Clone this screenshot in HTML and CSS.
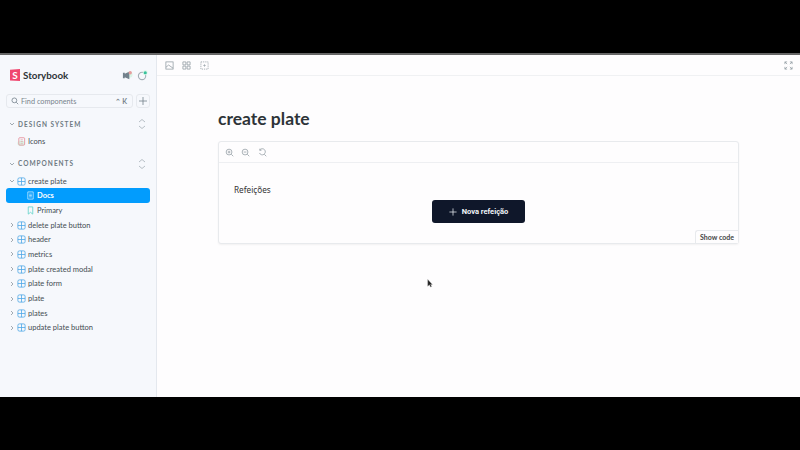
FILE: index.html
```html
<!DOCTYPE html>
<html lang="en">
<head>
    <meta charset="UTF-8">
    <title>create plate - Storybook</title>
    <link rel="stylesheet" href="styles.css">
</head>
<body>
    <div class="app">
        <aside class="sidebar">
            <div class="brand">
                <svg class="logo" viewBox="0 0 10 12"><path d="M0 0.7 L10 0 V12 L0 11.6 Z" fill="#f0476f"/><text x="5" y="9.6" text-anchor="middle" class="logo-s">S</text></svg>
                <span class="brand-name">Storybook</span>
                <svg class="brand-icon" viewBox="0 0 12 12"><circle cx="8" cy="5" r="3.5" fill="#d9f5e6"/><path d="M1 3 H3 V9 H1 Z M3 4 L8 2 V10 L3 8 Z" fill="#73828c"/><circle cx="9" cy="3" r="1.8" fill="#e69d9d"/></svg>
                <svg class="brand-icon second" viewBox="0 0 12 12"><circle cx="5.5" cy="6.5" r="4" fill="none" stroke="#a4afb6" stroke-width="1.2"/><circle cx="9" cy="3" r="2.6" fill="#d9f5e6"/><circle cx="9" cy="3" r="1.7" fill="#37c19d"/></svg>
            </div>
            <div class="search-row">
                <div class="search">
                    <svg class="icon" viewBox="0 0 10 10"><circle cx="4.2" cy="4.2" r="3" fill="none" stroke="#73828c"/><path d="M6.5 6.5 L9 9" stroke="#73828c"/></svg>
                    <span class="search-text">Find components</span>
                    <span class="search-key">⌃ K</span>
                </div>
                <div class="add-btn">
                    <svg class="icon" viewBox="0 0 10 10"><path d="M5 1 V9 M1 5 H9" stroke="#73828c" stroke-width="0.8"/></svg>
                </div>
            </div>

            <div class="section">
                <div class="section-head">
                    <svg class="chev" viewBox="0 0 6 6"><path d="M1 2 L3 4 L5 2" fill="none" stroke="#8b969e" stroke-width="0.8"/></svg>
                    <span class="section-title">DESIGN SYSTEM</span>
                    <svg class="updown" viewBox="0 0 8 12"><path d="M1 4 L4 1.5 L7 4 M1 8 L4 10.5 L7 8" fill="none" stroke="#a4afb6" stroke-width="0.8"/></svg>
                </div>
                <div class="row no-arrow">
                    <svg class="icon" viewBox="0 0 10 10"><rect x="0.5" y="4" width="8" height="6" rx="3" fill="#d9f5e6"/><rect x="2" y="0.8" width="6.5" height="8.2" rx="1" fill="none" stroke="#e58a96" stroke-width="0.9"/><path d="M4 3 H6.5 M4 5 H6.5 M4 7 H6.5" stroke="#e58a96" stroke-width="0.6"/></svg>
                    <span>Icons</span>
                </div>
            </div>

            <div class="section components">
                <div class="section-head">
                    <svg class="chev" viewBox="0 0 6 6"><path d="M1 2 L3 4 L5 2" fill="none" stroke="#8b969e" stroke-width="0.8"/></svg>
                    <span class="section-title">COMPONENTS</span>
                    <svg class="updown" viewBox="0 0 8 12"><path d="M1 4 L4 1.5 L7 4 M1 8 L4 10.5 L7 8" fill="none" stroke="#a4afb6" stroke-width="0.8"/></svg>
                </div>
                <div class="row">
                    <svg class="chev" viewBox="0 0 6 6"><path d="M1 2 L3 4 L5 2" fill="none" stroke="#8b969e" stroke-width="0.8"/></svg>
                    <svg class="icon" viewBox="0 0 10 10"><use href="#grid"/></svg>
                    <span>create plate</span>
                </div>
                <div class="row child selected">
                    <svg class="icon" viewBox="0 0 10 10"><path d="M2 1 H8 V9 H2 Z M3.5 3.5 H6.5 M3.5 5 H6.5 M3.5 6.5 H6.5" fill="none" stroke="#d4eeff" stroke-width="0.8"/></svg>
                    <span>Docs</span>
                </div>
                <div class="row child">
                    <svg class="icon" viewBox="0 0 10 10"><path d="M2.5 1 H7.5 V9 L5 7 L2.5 9 Z" fill="none" stroke="#5fd4c8" stroke-width="0.9"/></svg>
                    <span>Primary</span>
                </div>
                <div class="row"><svg class="chev" viewBox="0 0 6 6"><use href="#right"/></svg><svg class="icon" viewBox="0 0 10 10"><use href="#grid"/></svg><span>delete plate button</span></div>
                <div class="row"><svg class="chev" viewBox="0 0 6 6"><use href="#right"/></svg><svg class="icon" viewBox="0 0 10 10"><use href="#grid"/></svg><span>header</span></div>
                <div class="row"><svg class="chev" viewBox="0 0 6 6"><use href="#right"/></svg><svg class="icon" viewBox="0 0 10 10"><use href="#grid"/></svg><span>metrics</span></div>
                <div class="row"><svg class="chev" viewBox="0 0 6 6"><use href="#right"/></svg><svg class="icon" viewBox="0 0 10 10"><use href="#grid"/></svg><span>plate created modal</span></div>
                <div class="row"><svg class="chev" viewBox="0 0 6 6"><use href="#right"/></svg><svg class="icon" viewBox="0 0 10 10"><use href="#grid"/></svg><span>plate form</span></div>
                <div class="row"><svg class="chev" viewBox="0 0 6 6"><use href="#right"/></svg><svg class="icon" viewBox="0 0 10 10"><use href="#grid"/></svg><span>plate</span></div>
                <div class="row"><svg class="chev" viewBox="0 0 6 6"><use href="#right"/></svg><svg class="icon" viewBox="0 0 10 10"><use href="#grid"/></svg><span>plates</span></div>
                <div class="row"><svg class="chev" viewBox="0 0 6 6"><use href="#right"/></svg><svg class="icon" viewBox="0 0 10 10"><use href="#grid"/></svg><span>update plate button</span></div>
            </div>
        </aside>

        <main class="main">
            <div class="toolbar">
                <svg class="tool" viewBox="0 0 10 10"><rect x="1" y="1" width="8" height="8" fill="none" stroke="#8b969e" stroke-width="0.8"/><path d="M1 7 L4 4.5 L9 8" fill="none" stroke="#8b969e" stroke-width="0.8"/></svg>
                <svg class="tool" viewBox="0 0 10 10"><path d="M1 1 H4.3 V4.3 H1 Z M5.7 1 H9 V4.3 H5.7 Z M1 5.7 H4.3 V9 H1 Z M5.7 5.7 H9 V9 H5.7 Z" fill="none" stroke="#8b969e" stroke-width="0.8"/></svg>
                <svg class="tool" viewBox="0 0 10 10"><rect x="1" y="1" width="8" height="8" fill="none" stroke="#8b969e" stroke-width="0.8" stroke-dasharray="1.4 1"/><path d="M5 3.5 V6.5 M3.5 5 H6.5" stroke="#8b969e" stroke-width="0.6"/></svg>
                <svg class="tool expand" viewBox="0 0 10 10"><path d="M1 3.5 V1 H3.5 M6.5 1 H9 V3.5 M9 6.5 V9 H6.5 M3.5 9 H1 V6.5 M1 1 L3.5 3.5 M9 1 L6.5 3.5 M9 9 L6.5 6.5 M1 9 L3.5 6.5" fill="none" stroke="#8b969e" stroke-width="0.8"/></svg>
            </div>
            <div class="docs">
                <h1>create plate</h1>
                <div class="preview">
                    <div class="preview-bar">
                        <svg class="tool" viewBox="0 0 10 10"><circle cx="4.5" cy="4.5" r="3.2" fill="none" stroke="#8b969e" stroke-width="0.8"/><path d="M7 7 L9.2 9.2 M3 4.5 H6 M4.5 3 V6" stroke="#8b969e" stroke-width="0.8"/></svg>
                        <svg class="tool" viewBox="0 0 10 10"><circle cx="4.5" cy="4.5" r="3.2" fill="none" stroke="#8b969e" stroke-width="0.8"/><path d="M7 7 L9.2 9.2 M3 4.5 H6" stroke="#8b969e" stroke-width="0.8"/></svg>
                        <svg class="tool" viewBox="0 0 10 10"><path d="M2 2.2 A3.4 3.4 0 1 1 1.6 5.5 M2 0.8 V2.6 H3.8 M7 7 L9.2 9.2" fill="none" stroke="#8b969e" stroke-width="0.8"/></svg>
                    </div>
                    <div class="preview-body">
                        <p class="meals">Refeições</p>
                        <button class="new-meal" type="button">
                            <svg class="plus" viewBox="0 0 10 10"><path d="M5 0.5 V9.5 M0.5 5 H9.5" stroke="#f1f5f9" stroke-width="0.9"/></svg>
                            <span>Nova refeição</span>
                        </button>
                    </div>
                    <button class="show-code" type="button">Show code</button>
                </div>
            </div>
            <svg class="cursor" viewBox="0 0 6 10"><path d="M0.5 0.5 V8 L2.4 6.4 L3.6 9 L4.8 8.4 L3.6 6 H5.6 Z" fill="#222" stroke="#999" stroke-width="0.4"/></svg>
        </main>
    </div>

    <!-- shared icon shapes -->
    <svg class="defs" width="0" height="0">
        <defs>
            <g id="grid" fill="none" stroke="#4fa8e8" stroke-width="0.9">
                <rect x="1" y="1" width="8" height="8" rx="1.6"/>
                <path d="M5 1 V9 M1 5 H9"/>
            </g>
            <path id="right" d="M2 1 L4 3 L2 5" fill="none" stroke="#8b969e" stroke-width="0.8"/>
        </defs>
    </svg>
</body>
</html>
```

FILE: styles.css
```css
* {
    box-sizing: border-box;
}
html, body {
    margin: 0;
    height: 100%;
    background-color: #000;
    overflow: hidden;
}
body {
    padding-top: 53px;
    font-family: Lato, "Noto Sans", sans-serif;
    color: #333;
}
.defs {
    position: absolute;
}
.app {
    display: flex;
    height: 344px;
    background-color: #fefdfe;
    border-top: 2px solid #666;
}

/* sidebar */
.sidebar {
    width: 157px;
    flex-shrink: 0;
    background-color: #f6f8fc;
    border-right: 1px solid #e4e8ee;
    padding: 13px 6px 0 6px;
}
.brand {
    display: flex;
    align-items: center;
    height: 14px;
    padding-left: 4px;
}
.logo {
    width: 10px;
    height: 12px;
    margin-right: 3px;
}
.logo-s {
    fill: #fff;
    font-size: 10px;
    font-weight: 700;
    font-family: Lato, sans-serif;
}
.brand-name {
    font-size: 9.8px;
    font-weight: 700;
    color: #2e3438;
    flex: 1;
}
.brand-icon {
    width: 11px;
    height: 11px;
    margin-right: 4px;
}
.brand-icon.second {
    margin-right: 2px;
}
.search-row {
    display: flex;
    gap: 3px;
    margin-top: 12px;
}
.search {
    flex: 1;
    height: 14px;
    display: flex;
    align-items: center;
    gap: 2px;
    padding: 0 5px 0 4px;
    border: 1px solid #e6e9ee;
    border-radius: 3px;
    font-size: 7.3px;
    color: #79848c;
}
.search .icon {
    width: 8px;
    height: 8px;
}
.search-text {
    flex: 1;
}
.search-key {
    font-size: 7px;
    font-weight: 700;
}
.add-btn {
    width: 14px;
    height: 14px;
    display: flex;
    align-items: center;
    justify-content: center;
    border: 1px solid #e6e9ee;
    border-radius: 3px;
}
.section {
    margin-top: 8px;
}
.section.components {
    margin-top: 7px;
}
.section.components .section-head {
    margin-bottom: 2px;
}
.section-head {
    display: flex;
    align-items: center;
    gap: 3px;
    height: 16px;
    padding: 0 4px 0 3px;
}
.section-title {
    flex: 1;
    font-size: 6.5px;
    font-weight: 700;
    letter-spacing: 1px;
    color: #6e7a82;
}
.updown {
    width: 8px;
    height: 12px;
}
.chev {
    width: 6px;
    height: 6px;
    flex-shrink: 0;
}
.icon {
    width: 10px;
    height: 10px;
    flex-shrink: 0;
}
.row {
    display: flex;
    align-items: center;
    height: 14.7px;
    padding-left: 3px;
    font-size: 7.5px;
    color: #434c52;
}
.row .chev {
    margin-right: 2px;
}
.row .icon {
    width: 9px;
    height: 9px;
    margin-right: 2px;
}
.row.no-arrow {
    padding-left: 11px;
    margin-top: 2px;
}
.row.child {
    padding-left: 19.5px;
}
.row.child .icon {
    margin-right: 2.5px;
}
.row.selected {
    background-color: #029cfd;
    color: #fff;
    font-weight: 700;
    border-radius: 3px;
}

/* main area */
.main {
    flex: 1;
    position: relative;
    min-width: 0;
}
.toolbar {
    display: flex;
    align-items: center;
    gap: 8.5px;
    height: 21px;
    padding: 0 7px 0 7.5px;
    border-bottom: 1px solid #f0f1f3;
}
.tool {
    width: 9px;
    height: 9px;
    flex-shrink: 0;
}
.expand {
    margin-left: auto;
}
.docs {
    padding: 31px 61px 0 61px;
}
h1 {
    margin: 0;
    font-size: 17.5px;
    line-height: 24px;
    font-weight: 700;
    color: #2e3438;
}
.preview {
    position: relative;
    margin-top: 10px;
    height: 103px;
    background-color: #fefdfe;
    border: 1px solid #e8eaed;
    border-radius: 3px;
    box-shadow: 0 1px 2px rgba(0, 0, 0, 0.05);
}
.preview-bar {
    display: flex;
    align-items: center;
    gap: 7.5px;
    height: 21px;
    padding: 0 5.5px;
    border-bottom: 1px solid #eeeff2;
}
.preview-body {
    display: flex;
    flex-direction: column;
    padding: 20px 15px 0 15px;
}
.meals {
    margin: 0;
    font-family: "Noto Sans", sans-serif;
    font-size: 8.2px;
    line-height: 13px;
    color: #333;
}
.new-meal {
    align-self: center;
    display: flex;
    align-items: center;
    justify-content: center;
    gap: 5px;
    width: 93px;
    height: 23px;
    margin-top: 4px;
    padding-top: 1px;
    border: 0;
    border-radius: 3px;
    background-color: #0f172a;
    color: #f1f5f9;
    font-family: Roboto, sans-serif;
    font-size: 7.5px;
    font-weight: 700;
}
.plus {
    width: 8px;
    height: 8px;
}
.show-code {
    position: absolute;
    right: 0;
    bottom: 0;
    width: 43px;
    height: 13px;
    padding: 0;
    border: 1px solid #e8eaed;
    border-width: 1px 0 0 1px;
    border-radius: 3px 0 0 0;
    background-color: #fefdfe;
    color: #444;
    font-family: Lato, sans-serif;
    font-size: 7px;
    font-weight: 700;
}
.cursor {
    position: absolute;
    left: 270px;
    top: 224px;
    width: 6px;
    height: 9px;
}
```
